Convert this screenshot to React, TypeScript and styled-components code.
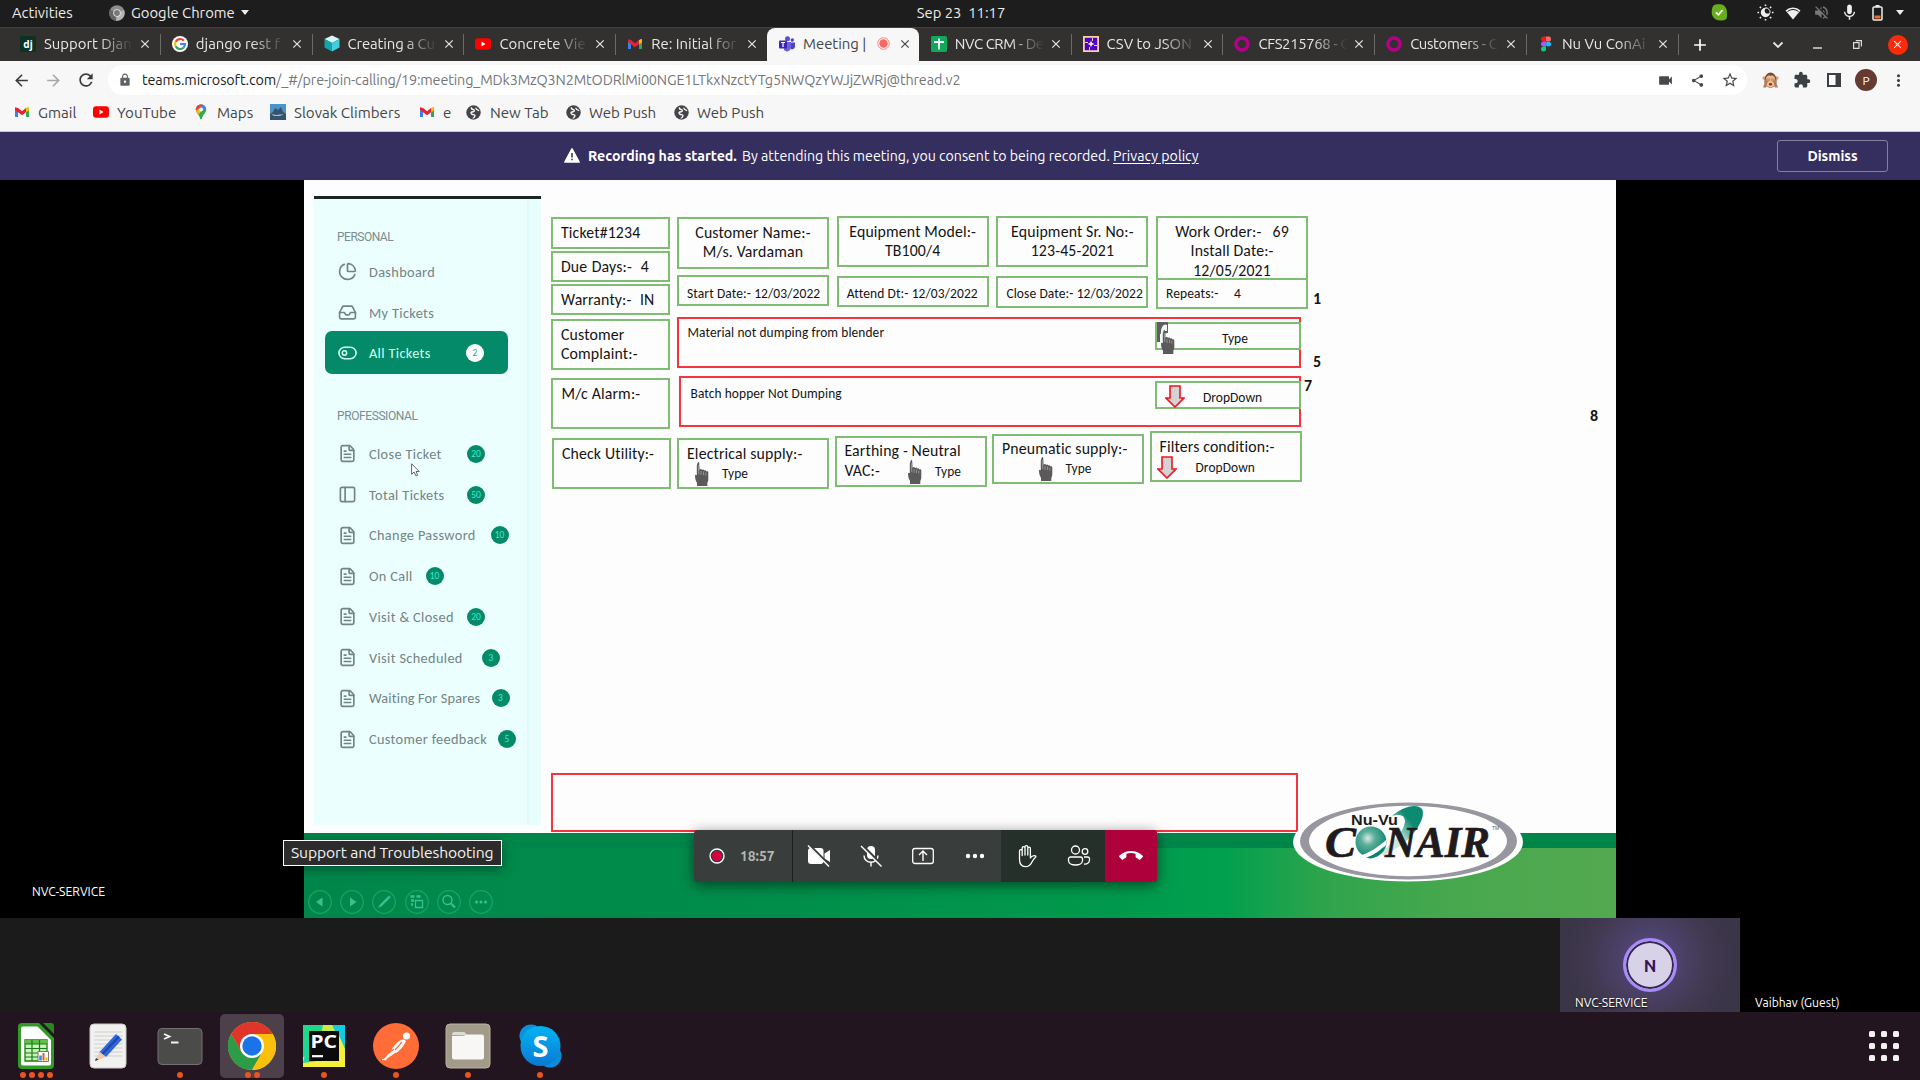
import React from "react";
import styled, { createGlobalStyle } from "styled-components";
import {
  MdArrowBack, MdArrowForward, MdRefresh, MdLock, MdVideocam, MdShare, MdStarBorder,
  MdExtension, MdMoreVert, MdCallEnd, MdMic, MdVolumeOff, MdClose, MdAdd,
} from "react-icons/md";
import { FileText, Inbox, PieChart, PanelLeft } from "lucide-react";

const UI = `"Ubuntu", "Noto Sans", "Open Sans", sans-serif`;
const SLIDE = `"Calibri", "Carlito", Lato, sans-serif`;

const Global = createGlobalStyle`
  * { box-sizing: border-box; }
  html, body { margin: 0; padding: 0; background: #000; overflow: hidden; }
  svg { display: block; flex: none; }
`;

const Screen = styled.div`
  width: 1920px; height: 1080px; display: flex; flex-direction: column;
  overflow: hidden; font-family: ${UI}; background: #000; white-space: pre;
`;

/* ---------- generic pieces ---------- */
const Label = styled.span<{ $w?: number; $ls?: number; $size?: number; $bold?: boolean; $ml?: number; $pt?: number }>`
  display: block; flex: none; white-space: pre;
  width: ${p => (p.$w ? p.$w + "px" : "auto")};
  margin-left: ${p => p.$ml ?? 0}px;
  padding-top: ${p => p.$pt ?? 0}px;
  letter-spacing: ${p => p.$ls ?? 0}px;
  font-size: ${p => (p.$size ? p.$size + "px" : "inherit")};
  font-weight: ${p => (p.$bold ? 700 : "inherit")};
`;
const Slot = styled.div<{ $w: number; $ml?: number }>`
  flex: none; width: ${p => p.$w}px; margin-left: ${p => p.$ml ?? 0}px;
  display: flex; align-items: center; justify-content: center;
`;
const Grow = styled.div`flex: 1;`;

/* ---------- desktop top bar ---------- */
const TopBar = styled.header`
  height: 28px; flex: none; display: flex; align-items: center; padding: 0 12px 2px;
  background: #1d1d1d; color: #ececec; font-size: 14.8px; border-bottom: 1px solid #43413f;
`;
const Side = styled.div`flex: 1; display: flex; align-items: center;`;
const Caret = styled.i<{ $ml?: number; $mr?: number }>`
  margin-left: ${p => p.$ml ?? 0}px; margin-right: ${p => p.$mr ?? 0}px;
  border: 4.5px solid transparent; border-top: 5px solid #eee; border-bottom: 0;
`;

/* ---------- tabs ---------- */
const TabStrip = styled.nav`
  height: 33px; flex: none; display: flex; background: #333130; padding-left: 8px;
`;
const TabBox = styled.div<{ $active?: boolean; $line?: boolean }>`
  position: relative; flex: none; width: 151.8px; display: flex; align-items: center; padding: 0 0 2px 12px;
  background: ${p => (p.$active ? "#f7f7f7" : "transparent")};
  color: ${p => (p.$active ? "#454545" : "#e8e8e8")};
  border-radius: 8px 8px 0 0; font-size: 14.9px;
  &::after {
    content: ""; position: absolute; right: -1px; top: 6px; width: 1px; height: 21px;
    background: ${p => (p.$line ? "#6c6a68" : "transparent")};
  }
`;
const TabTitle = styled.span<{ $ls?: number }>`
  margin-left: 8px; width: 89px; overflow: hidden; letter-spacing: ${p => p.$ls ?? 0}px;
  mask-image: linear-gradient(90deg, #000 62%, transparent 100%);
`;
const CloseCircle = styled.div`
  width: 20px; height: 20px; border-radius: 50%; background: #fc2a0b; color: #fff;
  display: flex; align-items: center; justify-content: center;
`;

/* ---------- toolbar ---------- */
const ToolRow = styled.div`
  height: 38px; flex: none; display: flex; align-items: center; background: #f7f7f7; color: #45464a; padding-left: 5px;
`;
const Omnibox = styled.div`
  width: 1639px; height: 30px; border-radius: 15px; background: #fff; margin-left: 6px;
  display: flex; align-items: center; color: #73767a; font-size: 14.4px;
  b { font-weight: 400; color: #1c1c1c; }
`;
const Bookmarks = styled.div`
  height: 33px; flex: none; display: flex; align-items: center; background: #f7f7f7; color: #43464a;
  font-size: 15.1px; border-bottom: 1px solid #c9cccd; padding-bottom: 6px;
`;
const Initial = styled.div`
  width: 22px; height: 22px; border-radius: 50%; background: #643a32; color: #fff; font-size: 12px;
  display: flex; align-items: center; justify-content: center;
`;

/* ---------- banner ---------- */
const Banner = styled.div`
  position: relative; height: 48px; flex: none; background: #352f60; color: #fff; font-size: 14.2px;
  display: flex; align-items: center; padding: 0 0 1px 564px;
  u { text-underline-offset: 2px; }
`;
const Dismiss = styled.button`
  width: 111px; height: 32px; margin: 0 32px 0 0; border: 1px solid #8481a0; border-radius: 3px; background: transparent;
  color: #fff; font: 700 14.1px ${UI}; padding: 0;
`;

/* ---------- stage ---------- */
const Stage = styled.main`
  position: relative; height: 738px; flex: none; background: #000; display: flex; justify-content: center;
`;
const Slide = styled.section`
  position: relative; width: 1312px; height: 738px; background: #fefdfe; color: #141414;
  font-family: ${SLIDE}; display: flex; flex-direction: column;
`;
const SlideBody = styled.div`height: 653px; flex: none; display: flex;`;
const SideNav = styled.aside`
  width: 227px; height: 629px; margin: 16px 0 0 10px; flex: none; border-top: 3px solid #1d2526;
  background: linear-gradient(90deg, #eafffe 213px, #e2f9f8 213px, #e2f9f8 215px, #e8fefd 215px);
  color: #758384; font-size: 14.3px; padding: 30px 0 0 11px;
`;
const NavHead = styled.div<{ $mt?: number; $ls: number }>`
  height: 17px; line-height: 17px; padding-left: 12px; font-size: 12px; margin-top: ${p => p.$mt ?? 0}px;
  font-family: Roboto, sans-serif; letter-spacing: ${p => p.$ls}px; color: #7d8c8e;
`;
const NavRow = styled.div<{ $active?: boolean; $h?: number }>`
  height: ${p => p.$h ?? 40.75}px; width: ${p => (p.$active ? 183 : 208)}px; display: flex; align-items: center; padding-left: 12.5px;
  border-radius: 7px; background: ${p => (p.$active ? "#048a68" : "transparent")};
  color: ${p => (p.$active ? "#d2fff3" : "inherit")};
`;
const NavText = styled.span<{ $w: number; $ls?: number }>`
  width: ${p => p.$w}px; margin-left: 12.5px; flex: none; letter-spacing: ${p => p.$ls ?? 0.35}px; font-weight: 500;
`;
const Count = styled.span<{ $light?: boolean }>`
  width: 18px; height: 18px; border-radius: 50%; flex: none; text-align: center; line-height: 18px; font-size: 9.5px;
  background: ${p => (p.$light ? "#fff" : "#048a68")}; color: ${p => (p.$light ? "#2c9c80" : "#3fe8cc")};
`;

const LeftCol = styled.div`width: 121px; margin: 37px 0 0 10px; flex: none;`;
const MainCol = styled.div`width: 636px; margin: 36px 0 0 5px; flex: none;`;
const Row = styled.div<{ $gap?: number; $h?: number }>`
  display: flex; align-items: flex-start; gap: ${p => p.$gap ?? 0}px; height: ${p => (p.$h ? p.$h + "px" : "auto")};
`;
const Column = styled.div`width: 152px; flex: none;`;
const Box = styled.div<{ $h: number; $w?: number; $mt?: number; $ml?: number; $pl?: number; $pt?: number; $center?: boolean; $small?: boolean; $red?: boolean; $ws?: number }>`
  height: ${p => p.$h}px; width: ${p => p.$w ?? 152}px; flex: none;
  margin-top: ${p => p.$mt ?? 0}px; margin-left: ${p => p.$ml ?? 0}px;
  padding: ${p => p.$pt ?? 3.5}px 0 0 ${p => (p.$center ? 0 : p.$pl ?? 8)}px;
  border: ${p => (p.$red ? "2px solid #f4343e" : "2px solid #7fbd74")};
  text-align: ${p => (p.$center ? "center" : "left")};
  font-size: ${p => (p.$small ? 13.5 : 15.8)}px; line-height: 19.7px;
  letter-spacing: ${p => (p.$small ? 0.1 : 0.15)}px; word-spacing: ${p => p.$ws ?? 0}px;
`;
const WideBox = styled(Box)`display: flex; justify-content: space-between;`;
const Action = styled.div<{ $mt: number }>`
  margin: ${p => p.$mt}px -2px 0 0; width: 146px; height: 28px; border: 2px solid #7fbd74; display: flex; align-items: center;
  padding-top: 3px;
`;
const Control = styled.div<{ $ml: number; $mt?: number; $gap?: number }>`
  display: flex; align-items: center; margin: ${p => p.$mt ?? 0}px 0 0 ${p => p.$ml}px; gap: ${p => p.$gap ?? 13}px;
  height: 23px; font-size: 13.4px; letter-spacing: 0.1px;
`;
const SameLine = styled.div`display: flex; align-items: flex-start;`;
const Marks = styled.div`width: 300px; flex: none; font-weight: 700; font-size: 16px; line-height: 20px;`;
const Mark = styled.div<{ $mt: number; $ml: number }>`
  height: 20px; margin: ${p => p.$mt}px 0 0 ${p => p.$ml}px;
`;
const BottomBox = styled.div`
  position: absolute; left: 247px; top: 593px; width: 747px; height: 59px; border: 2px solid #f4343e;
`;
const Footer = styled.footer`
  height: 85px; flex: none; border-top: 15px solid #008449;
  background: linear-gradient(90deg, #01864a 0, #008c4a 30%, #00994c 62%, #00a04e 70%, #30a44c 78%, #48a84e 88%, #54a950 100%);
  border-image: linear-gradient(90deg, #01864a, #008549) 1;
  border-left: 0; border-right: 0; border-bottom: 0;
  display: flex; align-items: flex-start; padding: 42px 0 0 4px; gap: 8.2px;
`;
const LogoSpot = styled.div`position: absolute; left: 987px; top: 619px;`;
const SpeakerName = styled.div`
  position: absolute; left: 32px; top: 703px; color: #fff; font-size: 12.2px; line-height: 17px; letter-spacing: 0px;
`;
const Tooltip = styled.div`
  position: absolute; left: 283px; top: 660px; width: 219px; height: 26px; border: 1px solid #fff; background: #2c2c2c;
  color: #f2f2f2; font-size: 15.7px; letter-spacing: -0.15px; line-height: 23px; padding-left: 7px; box-shadow: 0 3px 12px #0006;
`;
const Pointer = styled.div`position: absolute; left: 411px; top: 283px;`;
const CallBar = styled.div`
  position: absolute; left: 694px; top: 650px; width: 463px; height: 52px; border-radius: 4px; overflow: hidden;
  background: #393d3b; display: flex; color: #fff; box-shadow: 0 3px 14px #0008;
`;
const CallStatus = styled.div`
  width: 99px; border-right: 1px solid #1d201f; display: flex; align-items: center; padding-left: 15px; gap: 15px;
  color: #b4b6b5; font-size: 13.8px; font-weight: 600; flex: none;
`;
const CallBtn = styled.div<{ $bg?: string }>`
  width: 52px; height: 52px; flex: none; display: flex; align-items: center; justify-content: center;
  background: ${p => p.$bg ?? "transparent"};
`;

/* ---------- participants ---------- */
const Strip = styled.div`
  height: 94px; flex: none; background: #1b1b1b; display: flex; justify-content: flex-end;
`;
const Tile = styled.div<{ $speaking?: boolean }>`
  width: 180px; height: 94px; display: flex; flex-direction: column; align-items: center; color: #fff; font-size: 12.1px;
  background: ${p => (p.$speaking ? "radial-gradient(circle at 90px 42px, #5d4d8c 0, #4b4168 32px, #413950 60px, #3a3547 85px)" : "#000")};
  padding-top: 20px;
`;
const Avatar = styled.div<{ $show?: boolean }>`
  width: 54px; height: 54px; border-radius: 50%; border: 3px solid ${p => (p.$show ? "#a78bfa" : "transparent")};
  box-shadow: ${p => (p.$show ? "inset 0 0 0 2px #34284f" : "none")}; background: ${p => (p.$show ? "#d8d2e8" : "none")};
  color: #36165e; font-size: 17px; font-weight: 600; display: flex; align-items: center; justify-content: center; flex: none;
`;
const TileName = styled.div<{ $ls?: number }>`
  align-self: stretch; padding: 2px 0 0 15px; line-height: 17px; letter-spacing: ${p => p.$ls ?? 0}px;
  text-shadow: 0 1px 2px #000;
`;

/* ---------- dock ---------- */
const Dock = styled.footer`
  height: 68px; flex: none; background: #22151f; display: flex; align-items: center; padding-right: 21px;
`;
const DockItem = styled.div<{ $on?: boolean }>`
  width: 64px; height: 64px; margin: 0 4px; border-radius: 5px; flex: none; display: flex; flex-direction: column;
  align-items: center; background: ${p => (p.$on ? "#4c414a" : "transparent")}; padding-top: 8px;
`;
const DockGlyph = styled.div`height: 48px; flex: none; display: flex; align-items: center;`;
const Dots = styled.div`
  display: flex; gap: 3px; height: 6px; margin-top: 2px;
  i { width: 6px; height: 6px; border-radius: 50%; background: #e95420; }
`;

/* ---------- icons ---------- */
const Gmail = () => (
  <svg width="16" height="16" viewBox="0 0 16 16">
    <path d="M1 4v9h3V7z" fill="#3d7ff0" /><path d="M15 4v9h-3V7z" fill="#2faa54" />
    <path d="M12 4.6 15 3v3l-3 2.4z" fill="#fbbc04" /><path d="M1 3.2 4 4l4 3.2L12 4v4.2L8 11.2 1 6z" fill="#e8232d" />
    <path d="M12 4.2c1.5-1.6 3-1.2 3 .3V6l-3 2.3z" fill="#fbbc04" />
  </svg>
);
const YouTube = () => (
  <svg width="16" height="16" viewBox="0 0 16 16"><rect y="2.3" width="16" height="11.4" rx="3" fill="#f00" /><path d="M6.5 5.6v4.8L10.5 8z" fill="#fff" /></svg>
);
const Maps = () => (
  <svg width="16" height="16" viewBox="0 0 16 16">
    <path d="M8 .5c3 0 5.200 2.300 5.200 5 0 4-3.700 5-4.300 9.500H7.200C6.600 10.500 2.800 9.500 2.800 5.500 2.800 2.800 5 .5 8 .5z" fill="#34a853" />
    <path d="M8 .5C5 .5 2.800 2.800 2.800 5.500L5 8l5.500-7z" fill="#ea4335" />
    <path d="M8 .5c3 0 5.200 2.300 5.200 5L9 6z" fill="#4285f4" /><path d="M3 6.500C3.400 8.400 4.500 9.500 5.300 10.800L9.500 6 6 5z" fill="#fbbc04" />
    <circle cx="8" cy="5.500" r="1.900" fill="#fff" />
  </svg>
);
const Peaks = () => (
  <svg width="16" height="16" viewBox="0 0 16 16"><rect width="16" height="16" fill="#4b93c8" /><path d="M0 10l3-2 2-4 3 2 3-3 2 5 3 2v6H0z" fill="#35536a" /><path d="M1 10l5 1 8-1-4 2H4z" fill="#a9bcc8" /></svg>
);
const Globe = () => (
  <svg width="15" height="15" viewBox="0 0 16 16"><circle cx="8" cy="8" r="7.700" fill="#434549" /><path d="M6 2.500c-1 1.500.5 2 2 2.500s1 2-.5 2.200S4.500 8 6 9.500s3.500 0 3.500 2-2 2-2 3" fill="none" stroke="#f7f7f7" strokeWidth="1.500" /><path d="M10.500 3c0 1.800 1.500 2.500 3.500 3" stroke="#f7f7f7" strokeWidth="1.300" fill="none" /></svg>
);
const Django = () => (
  <svg width="16" height="16" viewBox="0 0 16 16"><rect width="16" height="16" fill="#0a3325" /><text x="8" y="11.500" textAnchor="middle" fontFamily="Noto Sans" fontWeight="700" fontSize="10" fill="#fff">dj</text></svg>
);
const Google = () => (
  <svg width="16" height="16" viewBox="0 0 16 16"><circle cx="8" cy="8" r="8" fill="#fff" /><g fill="none" strokeWidth="2.200"><path d="M11.800 4.700A5 5 0 0 0 3.600 5.700" stroke="#ea4335" /><path d="M3.600 5.700a5 5 0 0 0 0 4.600" stroke="#fbbc05" /><path d="M3.600 10.300a5 5 0 0 0 7.800 1.400" stroke="#34a853" /><path d="M8 8h5a5 5 0 0 1-1.600 3.700" stroke="#4285f4" /></g></svg>
);
const Cube = () => (
  <svg width="16" height="17" viewBox="0 0 16 16"><path d="M8 0l7.500 3.500L8 7.500.5 3.500z" fill="#d7f6f7" /><path d="M.5 3.500L8 7.500V16L.5 12z" fill="#0fa6ac" /><path d="M15.500 3.500L8 7.500V16l7.500-4z" fill="#3fd0dc" /></svg>
);
const Teams = () => (
  <svg width="16" height="16" viewBox="0 0 16 16"><circle cx="8.500" cy="2.800" r="2.500" fill="#5a50c8" /><circle cx="13.300" cy="4" r="1.700" fill="#4c45b8" /><path d="M5 6h7v6a4 4 0 0 1-7 2z" fill="#6a62dc" /><path d="M12 6.500h4V11a3 3 0 0 1-4 2z" fill="#4b45c0" /><rect y="4.500" width="8" height="8" rx="1" fill="#4422b8" /><path d="M2 6.500h4M4 6.500V11" stroke="#fff" strokeWidth="1.200" /></svg>
);
const Sheet = () => (
  <svg width="16" height="16" viewBox="0 0 16 16"><rect width="16" height="16" rx="1.500" fill="#10a95c" /><path d="M8 2.500v11M3 6h10" stroke="#fff" strokeWidth="1.800" /></svg>
);
const Csv = () => (
  <svg width="16" height="16" viewBox="0 0 16 16"><rect width="16" height="16" fill="#f9cfa4" /><rect x="1.800" y="1.800" width="12.400" height="12.400" fill="#4a00c8" /><path d="M8 4.500l1 2.300L11.500 8 9 9l-1 2.500L7 9 4.500 8 7 6.800z" fill="#f9e3cc" /><path d="M9.500 2v3M6.500 11v3M2 6.500h3M11 9.500h3" stroke="#f9cfa4" /></svg>
);
const Ring = () => (
  <svg width="16" height="16" viewBox="0 0 16 16"><circle cx="8" cy="8" r="6" fill="none" stroke="#b5008a" strokeWidth="3.400" /></svg>
);
const Figma = () => (
  <svg width="16" height="16" viewBox="0 0 16 16"><path d="M8 .5H5.500a2.500 2.500 0 0 0 0 5H8z" fill="#f21818" /><path d="M8 .5h2.500a2.500 2.500 0 0 1 0 5H8z" fill="#ff6a63" /><path d="M8 5.500H5.500a2.500 2.500 0 0 0 0 5H8z" fill="#a259ff" /><circle cx="10.500" cy="8" r="2.500" fill="#1abcfe" /><path d="M8 10.500H5.500A2.500 2.500 0 1 0 8 13z" fill="#0acf83" /></svg>
);
const ChromeMono = () => (
  <svg width="16" height="16" viewBox="0 0 16 16"><circle cx="8" cy="8" r="7.800" fill="#8d8d8d" /><path d="M8 8L1 4.500A7.800 7.800 0 0 0 7 15.700z" fill="#666" /><path d="M8 8l-1 7.700A7.800 7.800 0 0 0 15 5z" fill="#b5b5b5" /><circle cx="8" cy="8" r="3.800" fill="#e6e6e6" /><circle cx="8" cy="8" r="2.900" fill="#777" /></svg>
);
const Monkey = () => (
  <svg width="17" height="16" viewBox="0 0 17 16">
    <circle cx="2.200" cy="6" r="1.800" fill="#d9a07c" /><circle cx="14.800" cy="6" r="1.800" fill="#d9a07c" />
    <path d="M2.500 8a6 7.500 0 0 1 12 0c.5 5-2 7.500-6 7.500S2 13 2.500 8z" fill="#7d4a36" />
    <path d="M3.800 8C4 3.500 7 3 8.500 4 10 3 13 3.500 13.200 8l.8 3c0 3-2.500 4-5.500 4S3 14 3 11z" fill="#f0bd8e" />
    <path d="M1 15.500L3.500 9 3.800 6l3.800-.3.400 2.600-2.500 2L4 15.500zM16 15.500L13.500 9l-.3-3-3.800-.3L9 8.300l2.500 2 1.500 5.200z" fill="#b57a5a" />
    <path d="M4 6.500h3.500M4 8h3.500M9.500 6.500H13M9.500 8H13" stroke="#e7b48e" strokeWidth=".9" />
    <ellipse cx="8.500" cy="12.300" rx="1.600" ry="1.300" fill="#8c2f28" />
  </svg>
);
const SidePanelIcon = () => (
  <svg width="14" height="14" viewBox="0 0 14 14"><path d="M1 1h12v12H1z" fill="#fff" stroke="#3c3f43" strokeWidth="2" /><path d="M8.500 0H14v14H8.500z" fill="#3c3f43" /></svg>
);
const Sun = () => (
  <svg width="17" height="17" viewBox="0 0 17 17"><circle cx="8.500" cy="8.500" r="4.700" fill="#eee" /><circle cx="10.500" cy="6.700" r="2.800" fill="#1d1d1d" /><path d="M8.500 3.800a4.700 4.700 0 0 1 4.700 4.700" stroke="#eee" strokeWidth="1" fill="none" /><g stroke="#eee" strokeWidth="1.600"><path d="M8.500 .5v1.600M8.500 14.900v1.600M.5 8.500h1.600M14.900 8.500h1.600M2.800 2.800l1.200 1.200M13 13l1.200 1.200M2.800 14.200l1.200-1.200M13 4l1.200-1.200" /></g></svg>
);
const Wifi = () => (
  <svg width="16" height="14" viewBox="0 0 16 14"><path d="M.5 4.500a11 11 0 0 1 15 0L8 13.500z" fill="#eee" /><path d="M2.500 5.500a8.500 8.500 0 0 1 11 0" fill="none" stroke="#1d1d1d" strokeWidth="1" /></svg>
);
const Battery = () => (
  <svg width="11" height="16" viewBox="0 0 11 16"><path d="M3.500 0h4v2h-4z" fill="#eee" /><rect x="1" y="2" width="9" height="13" rx="1" fill="none" stroke="#eee" strokeWidth="1.500" /><path d="M2.500 10.500h6v3h-6z" fill="#ee6a2c" /></svg>
);
const SkypeOk = () => (
  <svg width="17" height="17" viewBox="0 0 17 17"><path d="M4.500.5C9 0 12 0 14 2.500S16 8 16 12s-3 4.500-6.500 4.500S3 15 1.500 12 .5 1 4.500.5z" fill="#68ad1b" /><path d="M5 8.500l2.500 2.300L11.500 6" stroke="#fff" strokeWidth="1.800" fill="none" /></svg>
);
const RecordDot = () => (
  <svg width="13" height="13" viewBox="0 0 13 13"><circle cx="6.500" cy="6.500" r="5.800" fill="none" stroke="#f58a88" /><circle cx="6.500" cy="6.500" r="4.200" fill="#fb6563" /></svg>
);
const Warning = () => (
  <svg width="16" height="15" viewBox="0 0 16 15"><path d="M8 .8L15.200 14H.8z" fill="#fff" stroke="#fff" strokeWidth="1.500" strokeLinejoin="round" /><path d="M8 5v4.500M8 10.700v1.600" stroke="#352f60" strokeWidth="1.500" /></svg>
);
const Toggle = () => (
  <svg width="19" height="14" viewBox="0 0 20 14"><rect x="1" y="1" width="18" height="12" rx="6" fill="none" stroke="#d2fff3" strokeWidth="1.700" /><circle cx="6.800" cy="7" r="2.300" fill="none" stroke="#d2fff3" strokeWidth="1.600" /></svg>
);
const PointHand = () => (
  <svg width="14" height="24" viewBox="0 0 14 24"><path d="M0 13.500c0-1 1-1.200 1.800-.2V3.500h0L2.800.5c.4-.7 1.300-.5 1.400.4L4.600 8c.3-1.300 2.200-1.200 2.400.2.400-1 2-.8 2.200.6.500-.8 2-.6 2.200.8.700-.6 1.900-.2 1.900 1V17c0 2-.5 3-1 3.800V24H2v-3C1 19.200 0 17 0 13.500z" fill="#5b595a" /><path d="M3.200 3l.6 9M6 9v4M8.500 9.500V13M10.800 10.500v3" stroke="#aaa" strokeWidth=".7" /></svg>
);
const DownArrow = () => (
  <svg width="20" height="23" viewBox="0 0 20 23"><path d="M5 1h10v12h4l-9 9-9-9h4z" fill="#d5d2d4" stroke="#f01522" strokeWidth="1.600" /></svg>
);
const ClickHand = () => (
  <svg width="18" height="32" viewBox="0 0 18 32"><path d="M0 0h11v11L3 12v8H0z" fill="#5f5d5e" /><path d="M4 10c0-5 3-9 6-7v6H8l-2 7-3 3z" fill="#f4f4f4" /><g transform="translate(4 8)"><path d="M0 13.500c0-1 1-1.200 1.800-.2V3.500L2.800.5c.4-.7 1.300-.5 1.400.4L4.600 8c.3-1.300 2.200-1.200 2.400.2.400-1 2-.8 2.200.6.500-.8 2-.6 2.200.8.700-.6 1.900-.2 1.900 1V17c0 2-.5 3-1 3.800V24H2v-3C1 19.200 0 17 0 13.500z" fill="#5b595a" /><path d="M3.200 3l.6 9M6 9v4M8.500 9.500V13M10.800 10.500v3" stroke="#aaa" strokeWidth=".7" /></g></svg>
);
const Cursor = () => (
  <svg width="9" height="14" viewBox="0 0 9 14"><path d="M.6.8v10.500l2.500-2.300L5 13l1.700-.8L5 8.500h3.200z" fill="#fff" stroke="#3b4444" strokeWidth=".8" /></svg>
);
const Logo = () => (
  <svg width="232" height="84" viewBox="0 0 232 84">
    <defs>
      <radialGradient id="ball" cx=".4" cy=".38" r=".65"><stop offset="0" stopColor="#d9ece6" /><stop offset=".35" stopColor="#5dae9b" /><stop offset="1" stopColor="#08846a" /></radialGradient>
      <linearGradient id="tail" x1="1" y1="0" x2="0" y2="1"><stop offset=".3" stopColor="#0d8b72" /><stop offset=".6" stopColor="#cfe5df" /></linearGradient>
    </defs>
    <ellipse cx="117" cy="43" rx="115" ry="39.500" fill="#fff" />
    <path fillRule="evenodd" d="M9 42a108.500 38.500 0 0 1 217 0a108.500 38.500 0 0 1-217 0zM18 42a99 35.200 0 0 0 198 0a99 35.200 0 0 0-198 0z" fill="#98969e" />
    <path d="M101 17C109 9 126 3 131 10c4 8-5 23-20 36L92 57l-2-4c14-10 22-20 24-30 0-7-5-8-13-6z" fill="url(#tail)" />
    <g fontFamily="Liberation Serif, serif" fontWeight="700" fontStyle="italic" fontSize="44" fill="#1f1b1d" stroke="#1f1b1d" strokeWidth=".7">
      <text x="34" y="57.500" textLength="31" lengthAdjust="spacingAndGlyphs">C</text>
      <text x="94" y="57.500" textLength="105" lengthAdjust="spacingAndGlyphs">NAIR</text>
    </g>
    <circle cx="80" cy="43" r="15.500" fill="url(#ball)" />
    <path d="M68 57c10-3 20-9 28-17l-1 6c-6 7-14 11-21 14z" fill="#fff" />
    <path d="M75 58.500c5-1 13-6 18-11-2 7-8 12-14 12z" fill="#08846a" />
    <text x="60" y="26" fontFamily="Liberation Sans, sans-serif" fontWeight="700" fontSize="14" fill="#1f1b1d" textLength="47" lengthAdjust="spacingAndGlyphs">Nu-Vu</text>
    <text x="201" y="31" fontFamily="Liberation Sans, sans-serif" fontSize="5" fill="#555">TM</text>
  </svg>
);

const PenControl = ({ kind }: { kind: number }) => (
  <svg width="24" height="24" viewBox="0 0 24 24">
    <circle cx="12" cy="12" r="11.300" fill="none" stroke="#12a56b" strokeWidth="1.200" />
    {kind === 0 && <path d="M14.500 7.500v9L8 12z" fill="#35c290" />}
    {kind === 1 && <path d="M10 7.500v9l6.500-4.500z" fill="#35c290" />}
    {kind === 2 && <path d="M6 18l2-3.500 9-9 1.700 1.700-9 9z" fill="#35c290" />}
    {kind === 3 && <g fill="none" stroke="#35c290" strokeWidth="1.300"><path d="M10.500 10.500h7v7h-7z" /><path d="M5.500 6.500h4M11.500 6.500h4M6 10.500h3M6 14.500h2" strokeWidth="2.500" /></g>}
    {kind === 4 && <g fill="none" stroke="#35c290"><circle cx="10.500" cy="10" r="4.500" strokeWidth="1.400" /><path d="M14 13.500l4 4" strokeWidth="2.200" /></g>}
    {kind === 5 && <g fill="#35c290"><circle cx="7.500" cy="12" r="1.500" /><circle cx="12" cy="12" r="1.500" /><circle cx="16.500" cy="12" r="1.500" /></g>}
  </svg>
);

/* call bar icons */
const RecIcon = () => (<svg width="16" height="16" viewBox="0 0 16 16"><circle cx="8" cy="8" r="7" fill="none" stroke="#fff" strokeWidth="1.300" /><circle cx="8" cy="8" r="5" fill="#d8003f" /></svg>);
const CamOff = () => (<svg width="24" height="24" viewBox="0 0 24 24"><rect x="1" y="4" width="15.500" height="16" rx="3" fill="#fff" /><path d="M17.500 9.500L23 6v12l-5.500-3.500z" fill="#fff" /><path d="M1.500 .5l22 22" stroke="#393d3b" strokeWidth="3" /><path d="M1 1.500l21 21" stroke="#fff" strokeWidth="1.400" /></svg>);
const MicOff = () => (<svg width="24" height="24" viewBox="0 0 24 24"><rect x="8" y="2" width="8" height="13" rx="4" fill="#fff" /><path d="M5 11.500c0 9 14 9 14 0M12 18.500V22.500" stroke="#fff" strokeWidth="1.400" fill="none" /><path d="M2.500 .8l21 21" stroke="#393d3b" strokeWidth="3" /><path d="M2 2l20.500 20.500" stroke="#fff" strokeWidth="1.400" /></svg>);
const ShareUp = () => (<svg width="24" height="24" viewBox="0 0 24 24"><rect x="1.700" y="4.500" width="20.600" height="15" rx="2.300" fill="none" stroke="#fff" strokeWidth="1.300" /><path d="M12 17V7.500M8 11l4-4 4 4" fill="none" stroke="#fff" strokeWidth="1.400" /></svg>);
const More = () => (<svg width="24" height="24" viewBox="0 0 24 24" fill="#fff"><circle cx="5" cy="12" r="2.200" /><circle cx="12" cy="12" r="2.200" /><circle cx="19" cy="12" r="2.200" /></svg>);
const Raise = () => (<svg width="24" height="24" viewBox="0 0 24 24" fill="none" stroke="#fff" strokeWidth="1.300" strokeLinecap="round" strokeLinejoin="round"><path d="M4.500 15V7a1.300 1.300 0 0 1 2.700 0v4.500V4a1.400 1.400 0 0 1 2.800 0v7V3a1.400 1.400 0 0 1 2.800 0v8V4.500a1.300 1.300 0 0 1 2.600 0V14c1-1.700 2.500-2.600 5-2.200.7.200.6 1 .1 1.400-2 1.500-2.700 3.500-3.900 5.500-1.500 2.700-3.300 4-6.300 4-3.600 0-5.800-2.800-5.800-7.700z" /></svg>);
const People = () => (<svg width="24" height="24" viewBox="0 0 24 24" fill="none" stroke="#fff" strokeWidth="1.300"><circle cx="8.500" cy="6" r="4" /><circle cx="18" cy="7.500" r="2.800" /><path d="M3.500 13h10a2 2 0 0 1 2 2v1.500c0 6-14 6-14 0V15a2 2 0 0 1 2-2zM17 13h3.500a2 2 0 0 1 2 2v1c0 3-2.500 4.500-5.500 4" /></svg>);

/* dock icons */
const dockIcons = [
  <svg width="46" height="46" viewBox="0 0 46 46"><path d="M9 0h17l15 15v27a4 4 0 0 1-4 4H9a4 4 0 0 1-4-4V4a4 4 0 0 1 4-4z" fill="#329a27" /><path d="M30 0h8a3 3 0 0 1 3 3v8z" fill="#28881d" /><path d="M10 3.500H24.500L38 17v23.500a2 2 0 0 1-2 2H10a2 2 0 0 1-2-2v-35a2 2 0 0 1 2-2z" fill="#fff" /><path d="M12 17h22v21H12z" fill="#c9f2bd" stroke="#1d7c12" strokeWidth="1.300" /><path d="M12 17h22v4H12z" fill="#5fc04c" /><path d="M12 21h22M12 25.500h22M12 30h22M12 34h22M19 17v21M26.500 17v21" stroke="#1d7c12" strokeWidth="1.200" /><path d="M25 28.500h10.500v10H25z" fill="#fff" stroke="#777" /><path d="M27.500 37.500v-5" stroke="#1c90e0" strokeWidth="2.500" /><path d="M30.500 37.500v-7.500" stroke="#e06020" strokeWidth="2" /><path d="M33.500 37.500v-3" stroke="#f0b400" strokeWidth="2" /></svg>,
  <svg width="46" height="46" viewBox="0 0 46 46"><rect x="5" y="1" width="36" height="44" rx="4" fill="#f1f1f0" stroke="#c9c9c9" /><path d="M9.500 9h28M9.500 13h28M9.500 17h28M9.500 21h28M9.500 25h28M9.500 29h28M9.500 33h28" stroke="#cfcfcf" /><path d="M31 11l6 5.500L21 34l-6.500-5z" fill="#2f66dc" /><path d="M34 13.500L17.500 31" stroke="#1c46ad" strokeWidth="2" /><path d="M14.500 29l6.500 5L10 38z" fill="#f1c9a8" /><path d="M11 35l2.500 1.800L10 38z" fill="#333" /></svg>,
  <svg width="46" height="46" viewBox="0 0 46 46"><rect x="1" y="5.500" width="44" height="36" rx="4" fill="#4b4b4a" stroke="#727270" /><path d="M7 11l5.500 2.500L7 16M14 19.500h7.500" stroke="#f4f4f4" strokeWidth="1.800" fill="none" /></svg>,
  <svg width="48" height="48" viewBox="0 0 48 48"><circle cx="24" cy="24" r="24" fill="#fbbc09" /><path d="M3.200 12A24 24 0 0 0 24 48l10.400-18L24 24l-10.400 6z" fill="#2d9c48" /><path d="M3.200 12A24 24 0 0 1 44.800 12H24l-10.400 18z" fill="#e0352b" /><path d="M44.800 12A24 24 0 0 1 24 48l10.400-18a12 12 0 0 0-10-18z" fill="#fbc00b" /><circle cx="24" cy="24" r="12" fill="#fff" /><circle cx="24" cy="24" r="9.700" fill="#1a73e8" /></svg>,
  <svg width="46" height="46" viewBox="0 0 46 46"><path d="M2 2h42v42H2z" fill="#21d789" /><path d="M24 2h20v20L30 26z" fill="#12cce0" /><path d="M22 2h9l5 10H20z" fill="#c9ec4a" /><path d="M2 44V34l20-4L36 8l8 18v18z" fill="#f6f03c" /><path d="M2 40l6-26 8 24z" fill="#1ad6a0" /><path d="M38 8l6 14V10z" fill="#12cce0" /><path d="M8 8h30v30H8z" fill="#0b0b0b" /><text x="9.500" y="25" fontFamily="Noto Sans, sans-serif" fontWeight="700" fontSize="18.500" fill="#fff" textLength="26.500" lengthAdjust="spacingAndGlyphs">PC</text><path d="M11 33.200h11" stroke="#fff" strokeWidth="2.200" /></svg>,
  <svg width="46" height="46" viewBox="0 0 46 46"><circle cx="23" cy="23" r="23" fill="#ff6c37" /><circle cx="33.500" cy="13" r="3.600" fill="#fff" /><path d="M31 16.500c-4-.5-11 6-12.500 11L11 36l1 1 10-7c4-1 9-7 11-12z" fill="#fff" /><path d="M22 27l7-8M16 30l5-4" stroke="#ff6c37" strokeWidth="1.200" /><path d="M9 36.500h4.500" stroke="#fff" strokeWidth="1.400" /></svg>,
  <svg width="46" height="46" viewBox="0 0 46 46"><rect x="1" y="1" width="44" height="44" rx="4" fill="#a39b89" stroke="#b9b2a3" /><path d="M7 12c0-2 .5-3 2.500-3h9c2 0 2 1 3 3.500z" fill="#dedbd2" /><path d="M7 13h12l2-1.500h16a2 2 0 0 1 2 2V34a2.500 2.500 0 0 1-2.500 2.500h-27A2.500 2.500 0 0 1 7 34z" fill="#f8f7f5" /></svg>,
  <svg width="46" height="46" viewBox="0 0 46 46"><circle cx="14" cy="13" r="11.500" fill="#0a93dd" /><circle cx="33" cy="33" r="11.500" fill="#0a8ddc" /><defs><linearGradient id="sk" x2="0" y2="1"><stop stopColor="#04b4f1" /><stop offset="1" stopColor="#0a78d4" /></linearGradient></defs><circle cx="23.500" cy="23" r="20" fill="url(#sk)" /><text x="23.500" y="33.500" textAnchor="middle" fontFamily="Noto Sans, sans-serif" fontWeight="700" fontSize="29" fill="#fff">S</text></svg>,
];
const dockDots = [4, 0, 1, 2, 1, 1, 1, 1];

const tabs: { icon: React.ReactNode; title: string; active?: boolean; line?: boolean; ls?: number }[] = [
  { icon: <Django />, title: "Support Djan", line: true },
  { icon: <Google />, title: "django rest f", line: true },
  { icon: <Cube />, title: "Creating a Cu", line: true, ls: -0.15 },
  { icon: <YouTube />, title: "Concrete Vie", line: true },
  { icon: <Gmail />, title: "Re: Initial for" },
  { icon: <Teams />, title: "Meeting |", active: true },
  { icon: <Sheet />, title: "NVC CRM - De", line: true, ls: -0.4 },
  { icon: <Csv />, title: "CSV to JSON", line: true },
  { icon: <Ring />, title: "CFS215768 - C", line: true, ls: -0.35 },
  { icon: <Ring />, title: "Customers - C", line: true, ls: -0.35 },
  { icon: <Figma />, title: "Nu Vu ConAi", line: true },
];

const nav = [
  { t: "Close Ticket", n: "20", w: 98 },
  { t: "Total Tickets", n: "50", w: 98 },
  { t: "Change Password", n: "10", w: 121.5 },
  { t: "On Call", n: "10", w: 56.5 },
  { t: "Visit & Closed", n: "20", w: 98 },
  { t: "Visit Scheduled", n: "3", w: 113 },
  { t: "Waiting For Spares", n: "3", w: 122.5, ls: 0.15 },
  { t: "Customer feedback", n: "5", w: 129 },
];

export default function App() {
  return (
    <Screen>
      <Global />
      <TopBar>
        <Side>
          <Label $w={97}>Activities</Label>
          <ChromeMono />
          <Label $ml={6}>Google Chrome</Label>
          <Caret $ml={6} />
        </Side>
        <Label $ml={2}>Sep 23  11:17</Label>
        <Side>
          <Grow />
          <SkypeOk />
          <Slot $w={28} $ml={23}><Sun /></Slot>
          <Slot $w={28}><Wifi /></Slot>
          <Slot $w={28}><MdVolumeOff size={17} color="#777" /></Slot>
          <Slot $w={28}><MdMic size={19} color="#eee" /></Slot>
          <Slot $w={28}><Battery /></Slot>
          <Caret $ml={5} $mr={4} />
        </Side>
      </TopBar>

      <TabStrip>
        {tabs.map(t => (
          <TabBox key={t.title} $active={t.active} $line={t.line}>
            {t.icon}
            {t.active ? (
              <>
                <Label $ml={8} $w={74}>{t.title}</Label>
                <RecordDot />
                <Slot $w={16} $ml={7}><MdClose size={14} /></Slot>
              </>
            ) : (
              <>
                <TabTitle $ls={t.ls}>{t.title}</TabTitle>
                <Slot $w={16} $ml={4}><MdClose size={14} /></Slot>
              </>
            )}
          </TabBox>
        ))}
        <Slot $w={40} $ml={2}><MdAdd size={20} color="#fff" /></Slot>
        <Slot $w={40} $ml={38}>
          <svg width="12" height="8" viewBox="0 0 12 8"><path d="M1.500 1.500L6 6l4.500-4.500" stroke="#e6e6e6" strokeWidth="1.800" fill="none" /></svg>
        </Slot>
        <Slot $w={40}><svg width="9" height="8" viewBox="0 0 9 8"><path d="M0 7h9" stroke="#e6e6e6" strokeWidth="1.400" /></svg></Slot>
        <Slot $w={40}><svg width="9" height="9" viewBox="0 0 9 9"><path d="M.6 2.600h5.400v5.800H.6zM2.800 .6h5.600V6.500" stroke="#ddd" strokeWidth="1.200" fill="none" /></svg></Slot>
        <Slot $w={40}><CloseCircle><MdClose size={13} /></CloseCircle></Slot>
      </TabStrip>

      <ToolRow>
        <Slot $w={32}><MdArrowBack size={19} color="#3a3a3c" /></Slot>
        <Slot $w={33}><MdArrowForward size={19} color="#a6a7a9" /></Slot>
        <Slot $w={32}><MdRefresh size={20} color="#3a3a3c" /></Slot>
        <Omnibox>
          <Slot $w={34}><MdLock size={14} color="#5f6368" /></Slot>
          <Label $ls={-0.135}><b>teams.microsoft.com</b>/_#/pre-join-calling/19:meeting_MDk3MzQ3N2MtODRlMi00NGE1LTkxNzctYTg5NWQzYWJjZWRj@thread.v2</Label>
          <Grow />
          <Slot $w={32}><MdVideocam size={17} color="#45484c" /></Slot>
          <Slot $w={32}><MdShare size={15} color="#45484c" /></Slot>
          <Slot $w={34}><MdStarBorder size={18} color="#45484c" /></Slot>
        </Omnibox>
        <Slot $w={32} $ml={7}><Monkey /></Slot>
        <Slot $w={32}><MdExtension size={18} color="#3c3f43" /></Slot>
        <Slot $w={32}><SidePanelIcon /></Slot>
        <Slot $w={32}><Initial>P</Initial></Slot>
        <Slot $w={32}><MdMoreVert size={19} color="#3c3f43" /></Slot>
      </ToolRow>

      <Bookmarks>
        <Slot $w={16} $ml={14}><Gmail /></Slot><Label $ml={8} $w={55}>Gmail</Label>
        <YouTube /><Label $ml={8} $w={76}>YouTube</Label>
        <Maps /><Label $ml={8} $w={53}>Maps</Label>
        <Peaks /><Label $ml={8} $w={125}>Slovak Climbers</Label>
        <Gmail /><Label $ml={8} $w={23}>e</Label>
        <Globe /><Label $ml={9} $w={76}>New Tab</Label>
        <Globe /><Label $ml={8} $w={85}>Web Push</Label>
        <Globe /><Label $ml={8}>Web Push</Label>
      </Bookmarks>

      <Banner>
        <Warning />
        <Label $ml={8} $bold $w={154}>Recording has started.</Label>
        <Label $w={371} $ls={-0.02}>By attending this meeting, you consent to being recorded.</Label>
        <Label><u>Privacy policy</u></Label>
        <Grow />
        <Dismiss>Dismiss</Dismiss>
      </Banner>

      <Stage>
        <Slide>
          <SlideBody>
            <SideNav>
              <NavHead $ls={-0.5}>PERSONAL</NavHead>
              <NavRow $h={51}><PieChart size={19} strokeWidth={2.1} /><NavText $w={80}>Dashboard</NavText></NavRow>
              <NavRow $h={31}><Inbox size={19} strokeWidth={2.1} /><NavText $w={80}>My Tickets</NavText></NavRow>
              <NavRow $h={3} />
              <NavRow $active $h={43}><Toggle /><NavText $w={97}>All Tickets</NavText><Count $light>2</Count></NavRow>
              <NavHead $mt={34} $ls={-0.4}>PROFESSIONAL</NavHead>
              <NavRow $h={8.5} />
              {nav.map((r, i) => (
                <NavRow key={r.t}>
                  {i === 1 ? <PanelLeft size={19} strokeWidth={2.1} /> : <FileText size={19} strokeWidth={2.1} />}
                  <NavText $w={r.w} $ls={r.ls}>{r.t}</NavText><Count>{r.n}</Count>
                </NavRow>
              ))}
            </SideNav>

            <LeftCol>
              <Box $w={119} $h={32}>Ticket#1234</Box>
              <Box $w={119} $h={31} $mt={2} $ws={0.7}>Due Days:-  4</Box>
              <Box $w={119} $h={31} $mt={2} $ws={0.5}>Warranty:-  IN</Box>
              <Box $w={119} $h={51} $mt={4}>{"Customer\nComplaint:-"}</Box>
              <Box $w={119} $h={51} $mt={8} $ml={0} $pl={8.500} $pt={4}>M/c Alarm:-</Box>
              <Box $w={119} $h={51} $mt={9} $ml={1} $pt={4}>Check Utility:-</Box>
            </LeftCol>

            <MainCol>
              <Row $gap={7.700} $h={101}>
                <Column>
                  <Box $h={52} $mt={1} $center>{"Customer Name:-\nM/s. Vardaman"}</Box>
                  <Box $h={31} $mt={6} $small $pt={6.500}>Start Date:- 12/03/2022</Box>
                </Column>
                <Column>
                  <Box $h={51} $center>{"Equipment Model:-\nTB100/4"}</Box>
                  <Box $h={31} $mt={9} $small $pt={5.500}>Attend Dt:- 12/03/2022</Box>
                </Column>
                <Column>
                  <Box $h={51} $center>{"Equipment Sr. No:-\n123-45-2021"}</Box>
                  <Box $h={32} $mt={9} $small $pt={5.500}>Close Date:- 12/03/2022</Box>
                </Column>
                <Column>
                  <Box $h={64} $center>{"Work Order:-   69\nInstall Date:-\n12/05/2021"}</Box>
                  <Box $h={31} $mt={-2} $small $pt={3.500} $ws={0.7}>Repeats:-    4</Box>
                </Column>
              </Row>
              <WideBox $red $w={624} $h={51} $small $pt={0}>
                <Control $ml={0.500} $mt={2}>Material not dumping from blender</Control>
                <Action $mt={3}><SameLine><ClickHand /></SameLine><Label $ml={47} $pt={3}>Type</Label></Action>
              </WideBox>
              <WideBox $red $w={622} $ml={2} $mt={8} $h={51} $small $pt={0}>
                <Control $ml={1.500} $mt={4.500}>Batch hopper Not Dumping</Control>
                <Action $mt={3}><Slot $w={20} $ml={8}><DownArrow /></Slot><Label $ml={18} $pt={2}>DropDown</Label></Action>
              </WideBox>
              <Row $gap={5.500}>
                <Box $w={152} $h={51} $mt={11} $pt={4}>Electrical supply:-<Control $ml={8} $mt={-1}><PointHand />Type</Control></Box>
                <Box $w={152} $h={51} $mt={9} $pt={3}>{"Earthing - Neutral\n"}<SameLine>VAC:-<Control $ml={28}><PointHand />Type</Control></SameLine></Box>
                <Box $w={152} $h={50} $mt={7} $pt={3}>Pneumatic supply:-<Control $ml={36.500} $mt={-1}><PointHand />Type</Control></Box>
                <Box $w={152} $h={51} $mt={4} $pt={3.500}>Filters condition:-<Control $ml={-2.500} $mt={0} $gap={18.500}><DownArrow />DropDown</Control></Box>
              </Row>
            </MainCol>

            <Marks>
              <Mark $mt={109} $ml={0}>1</Mark>
              <Mark $mt={43} $ml={0}>5</Mark>
              <Mark $mt={4} $ml={-9}>7</Mark>
              <Mark $mt={10} $ml={277}>8</Mark>
            </Marks>
          </SlideBody>
          <Footer>{[0, 1, 2, 3, 4, 5].map(k => <PenControl key={k} kind={k} />)}</Footer>
          <BottomBox />
          <LogoSpot><Logo /></LogoSpot>
        </Slide>
        <Pointer><Cursor /></Pointer>
        <SpeakerName>NVC-SERVICE</SpeakerName>
        <Tooltip>Support and Troubleshooting</Tooltip>
        <CallBar>
          <CallStatus><RecIcon />18:57</CallStatus>
          <CallBtn><CamOff /></CallBtn>
          <CallBtn><MicOff /></CallBtn>
          <CallBtn><ShareUp /></CallBtn>
          <CallBtn><More /></CallBtn>
          <CallBtn $bg="#25302b"><Raise /></CallBtn>
          <CallBtn $bg="#25302b"><People /></CallBtn>
          <CallBtn $bg="#ae003a"><MdCallEnd size={24} /></CallBtn>
        </CallBar>
      </Stage>

      <Strip>
        <Tile $speaking><Avatar $show>N</Avatar><TileName>NVC-SERVICE</TileName></Tile>
        <Tile><Avatar /><TileName>Vaibhav (Guest)</TileName></Tile>
      </Strip>

      <Dock>
        {dockIcons.map((ic, i) => (
          <DockItem key={i} $on={i === 3}>
            <DockGlyph>{ic}</DockGlyph>
            <Dots>{Array.from({ length: dockDots[i] }, (_, k) => <i key={k} />)}</Dots>
          </DockItem>
        ))}
        <Grow />
        <svg width="30" height="30" viewBox="0 0 30 30" fill="#f3f1ef">
          {[0, 12, 24].map(y => [0, 12, 24].map(x => <rect key={x + "-" + y} x={x} y={y} width="6" height="6" rx="1.500" />))}
        </svg>
      </Dock>
    </Screen>
  );
}
